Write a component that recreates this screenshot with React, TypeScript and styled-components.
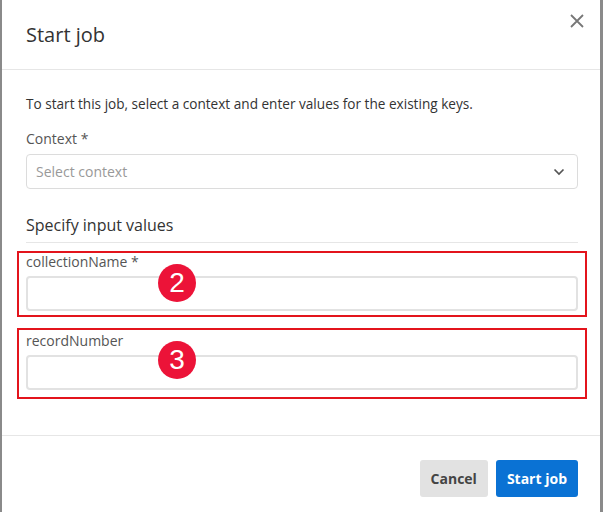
import * as React from "react";
import styled, { createGlobalStyle } from "styled-components";

const GlobalStyle = createGlobalStyle`
  html, body {
    margin: 0;
    padding: 0;
    background: #8a8a8a;
    font-family: "Open Sans", "Liberation Sans", sans-serif;
  }
  * { box-sizing: border-box; }
`;

const SBackdrop = styled.div`
  width: 603px;
  height: 512px;
  padding: 0 3px 0 2px;
  background: #8a8a8a;
`;

const SModal = styled.div`
  width: 100%;
  height: 100%;
  background: #fff;
  display: flex;
  flex-direction: column;
`;

const SHeader = styled.div`
  height: 70px;
  padding: 0 24px;
  display: flex;
  align-items: center;
  justify-content: space-between;
  border-bottom: 1px solid #e6e6e6;
  position: relative;
`;

const STitle = styled.h2`
  margin: 0;
  font-size: 20px;
  font-weight: 400;
  color: #333;
`;

const SClose = styled.button`
  position: absolute;
  right: 14px;
  top: 12px;
  border: 0;
  background: none;
  padding: 0;
  width: 18px;
  height: 18px;
  cursor: pointer;
`;

const SBody = styled.div`
  flex: 1;
  padding: 24px 22px 0 24px;
  display: flex;
  flex-direction: column;
`;

const SIntro = styled.p`
  margin: 0 0 16px;
  font-size: 13.6px;
  line-height: 20px;
  color: #333;
`;

const SLabel = styled.label`
  display: block;
  font-size: 14px;
  line-height: 18px;
  color: #555;
  margin-bottom: 6px;
`;

const SSelect = styled.div`
  height: 35px;
  border: 1px solid #dcdcdc;
  border-radius: 4px;
  display: flex;
  align-items: center;
  justify-content: space-between;
  padding: 0 12px 0 9px;
  font-size: 14px;
  color: #999;
`;

const SSection = styled.h3`
  margin: 24px 0 0;
  padding-bottom: 5px;
  font-size: 16px;
  line-height: 24px;
  font-weight: 400;
  color: #333;
  border-bottom: 1px solid #e6e6e6;
`;

interface IFieldBox {
  top: number;
  height: number;
  inset: number;
}

const SFieldBox = styled.div<IFieldBox>`
  position: relative;
  margin: ${({ top }) => top}px -9px 0 -9px;
  height: ${({ height }) => height}px;
  border: 2px solid #e3141c;
  padding: ${({ inset }) => inset}px 7px 0;

  ${SLabel} {
    margin-bottom: 5px;
  }
`;

const SInput = styled.div`
  height: 35px;
  border: 2px solid #e2e2e2;
  border-radius: 4px;
`;

const SBadge = styled.div`
  position: absolute;
  left: 139px;
  top: 11px;
  width: 38px;
  height: 38px;
  border-radius: 50%;
  background: #ec1338;
  color: #fff;
  font-family: "Liberation Sans", Arial, sans-serif;
  font-size: 28px;
  line-height: 38px;
  text-align: center;
`;

const SFooter = styled.div`
  height: 77px;
  border-top: 1px solid #e6e6e6;
  display: flex;
  align-items: flex-start;
  justify-content: flex-end;
  gap: 8px;
  padding: 24px 22px 0 0;
`;

interface IButton {
  primary?: boolean;
}

const SButton = styled.button<IButton>`
  height: 37px;
  border: 0;
  border-radius: 3px;
  padding: 0 11px;
  font-family: "Open Sans", "Liberation Sans", sans-serif;
  font-size: 14px;
  font-weight: 700;
  background: ${({ primary }) => (primary ? "#0a72d4" : "#e2e2e2")};
  color: ${({ primary }) => (primary ? "#fff" : "#444")};
  cursor: pointer;
`;

const App = () => {
  return (
    <SBackdrop>
      <GlobalStyle />
      <SModal>
        <SHeader>
          <STitle>Start job</STitle>
          <SClose aria-label="Close">
            <svg width="18" height="18" viewBox="0 0 18 18">
              <path d="M3 3L15 15M15 3L3 15" stroke="#777" strokeWidth="1.8" />
            </svg>
          </SClose>
        </SHeader>
        <SBody>
          <SIntro>
            To start this job, select a context and enter values for the existing keys.
          </SIntro>
          <SLabel>Context *</SLabel>
          <SSelect>
            <span>Select context</span>
            <svg width="12" height="8" viewBox="0 0 12 8">
              <path d="M1.5 1.5L6 6L10.5 1.5" fill="none" stroke="#555" strokeWidth="1.7" />
            </svg>
          </SSelect>
          <SSection>Specify input values</SSection>
          <SFieldBox top={8} height={66} inset={0}>
            <SLabel>collectionName *</SLabel>
            <SInput />
            <SBadge>2</SBadge>
          </SFieldBox>
          <SFieldBox top={11} height={71} inset={2}>
            <SLabel>recordNumber</SLabel>
            <SInput />
            <SBadge>3</SBadge>
          </SFieldBox>
        </SBody>
        <SFooter>
          <SButton>Cancel</SButton>
          <SButton primary>Start job</SButton>
        </SFooter>
      </SModal>
    </SBackdrop>
  );
};

export default App;
